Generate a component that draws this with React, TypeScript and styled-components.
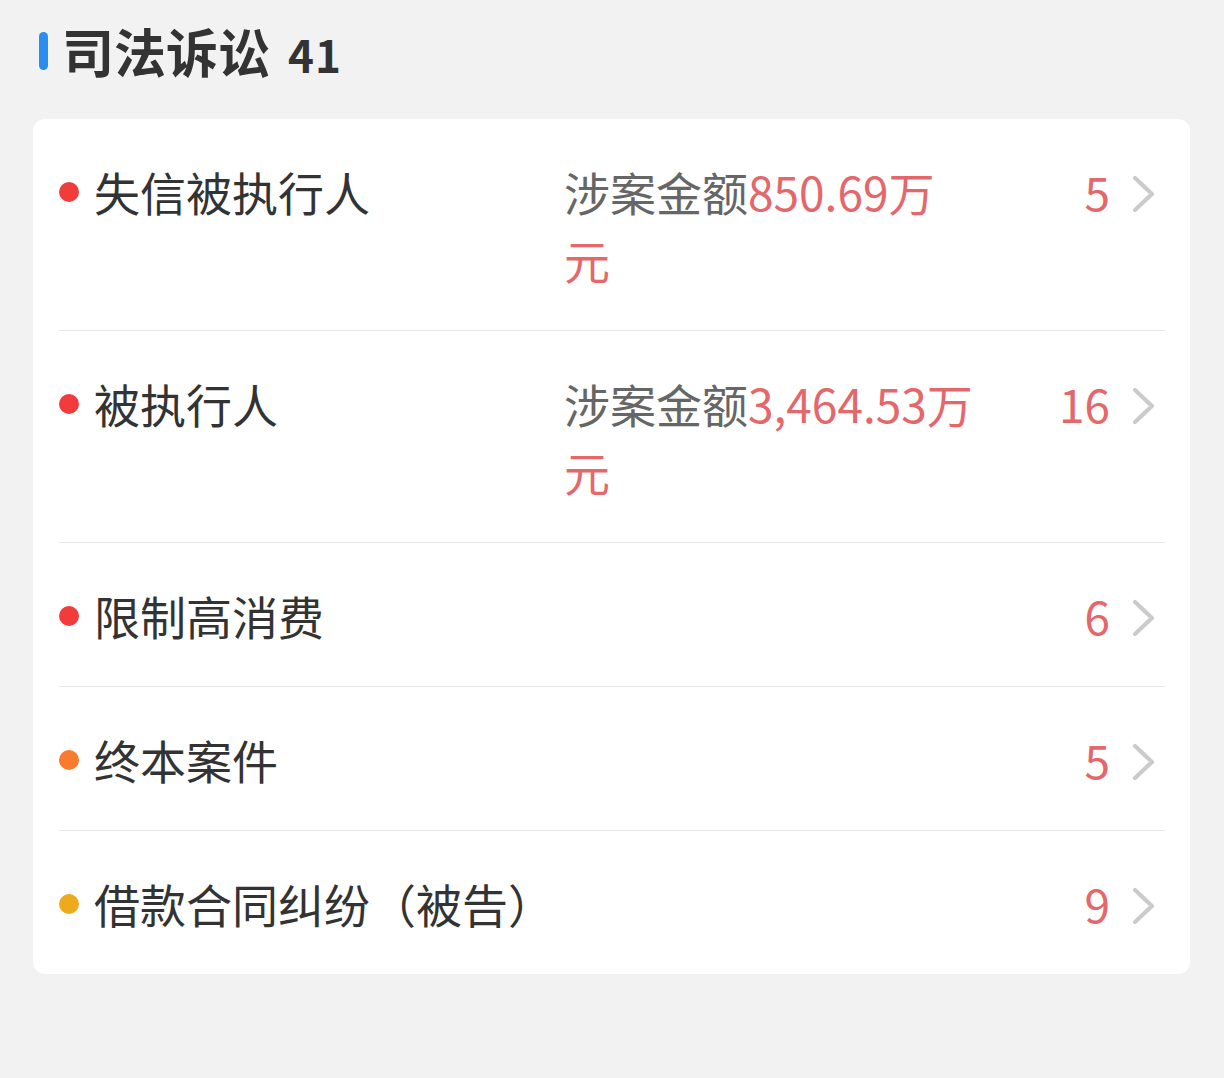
import { FC } from "react"
import styled, { createGlobalStyle } from "styled-components"

const GlobalStyle = createGlobalStyle`
  *, *::before, *::after {
    box-sizing: border-box;
  }
  html, body {
    margin: 0;
    padding: 0;
    background: #f2f2f2;
    font-family: "Noto Sans CJK SC", "Noto Sans", sans-serif;
  }
`

type Item = {
  label: string
  dot: string
  count: number
  amount?: string
}

const ITEMS: Item[] = [
  { label: "失信被执行人", dot: "#f23b3b", count: 5, amount: "850.69万元" },
  { label: "被执行人", dot: "#f23b3b", count: 16, amount: "3,464.53万元" },
  { label: "限制高消费", dot: "#f23b3b", count: 6 },
  { label: "终本案件", dot: "#f97c2e", count: 5 },
  { label: "借款合同纠纷（被告）", dot: "#eea91c", count: 9 },
]

const Chevron: FC = () => (
  <svg width="26" height="38" viewBox="0 0 26 38" fill="none">
    <path d="M4 3 L21 19 L4 35" stroke="#cbcbcb" strokeWidth="4.2" strokeLinecap="round" strokeLinejoin="round" />
  </svg>
)

export default function App() {
  return (
    <>
      <GlobalStyle />
      <Page>
        <Header>
          <Bar />
          <Title>
            司法诉讼<Total>41</Total>
          </Title>
        </Header>
        <Card>
          {ITEMS.map((item, i) => (
            <Row key={item.label} $last={i === ITEMS.length - 1}>
              <DotCell>
                <Dot $color={item.dot} />
              </DotCell>
              <Label>{item.label}</Label>
              <Amount>
                {item.amount && (
                  <>
                    涉案金额<Money>{item.amount}</Money>
                  </>
                )}
              </Amount>
              <Count>{item.count}</Count>
              <ArrowCell>
                <Chevron />
              </ArrowCell>
            </Row>
          ))}
        </Card>
      </Page>
    </>
  )
}

const Page = styled.div`
  padding: 0 34px 0 33px;
`

const Header = styled.div`
  height: 101px;
  display: flex;
  align-items: center;
  padding-left: 6px;
  gap: 14px;
`

const Bar = styled.div`
  width: 9px;
  height: 38px;
  border-radius: 5px;
  background: #2a8df0;
`

const Title = styled.h1`
  margin: 0;
  font-size: 52px;
  font-weight: 700;
  color: #333333;
  line-height: 1;
`

const Total = styled.span`
  font-size: 44px;
  margin-left: 18px;
  letter-spacing: 1px;
`

const Card = styled.div`
  margin-top: 18px;
  background: #ffffff;
  border-radius: 12px;
  padding: 0 25px 0 26px;
`

const Row = styled.div<{ $last: boolean }>`
  display: grid;
  grid-template-columns: 35px 470px 416px 1fr 55px;
  align-items: start;
  padding: 38px 0 37px;
  border-bottom: ${(p) => (p.$last ? "none" : "1px solid #e8e8e8")};
  line-height: 68px;
  font-size: 46px;
`

const DotCell = styled.div`
  height: 68px;
  display: flex;
  align-items: center;
`

const Dot = styled.span<{ $color: string }>`
  width: 20px;
  height: 20px;
  border-radius: 50%;
  background: ${(p) => p.$color};
  margin-top: 2px;
`

const Label = styled.div`
  color: #333333;
`

const Amount = styled.div`
  color: #666666;
  word-break: break-all;
`

const Money = styled.span`
  color: #e4686b;
`

const Count = styled.div`
  color: #e4686b;
  text-align: right;
`

const ArrowCell = styled.div`
  height: 68px;
  display: flex;
  align-items: center;
  padding-left: 21px;
  padding-top: 6px;
`
